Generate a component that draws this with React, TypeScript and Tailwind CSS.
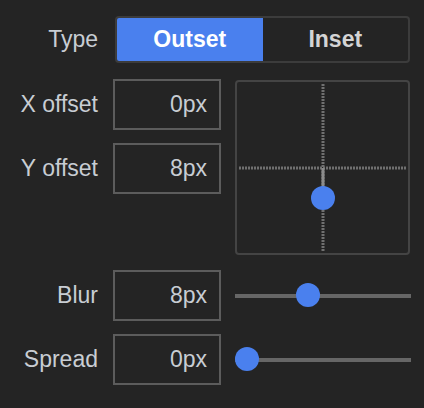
import { useState } from 'react';

const MAX = 20;

const Field = ({ label, value }: { label: string; value: number }) => (
  <div className="flex items-center h-[51px]">
    <span className="w-[98px] text-right text-[#c8cdd3] whitespace-nowrap">{label}</span>
    <div className="ml-[15px] w-[108px] h-[51px] border-2 border-[#5c5c5c] flex items-center justify-end pr-[12px] text-[#c8cdd3]">
      {value}px
    </div>
  </div>
);

const Slider = ({ value }: { value: number }) => (
  <div className="relative ml-[14px] w-[176px] h-[51px] flex items-center">
    <div className="w-full h-[4px] bg-[#666666]" />
    <div
      className="absolute top-[13px] w-[24px] h-[24px] rounded-full bg-[#4a80ee]"
      style={{ left: (value / MAX) * 152 }}
    />
  </div>
);

const OffsetPad = ({ x, y }: { x: number; y: number }) => {
  const c = 86;
  const hx = c + x * 3.75;
  const hy = c + y * 3.75;
  return (
    <div className="ml-[14px] mt-[1px] w-[175px] h-[175px] border-2 border-[#444444] rounded-[4px]">
      <svg width="171" height="171" viewBox="0 0 171 171">
        <line x1={c} y1="2" x2={c} y2="169" stroke="#707070" strokeWidth="3" strokeDasharray="2 1" />
        <line x1="2" y1={c} x2="169" y2={c} stroke="#707070" strokeWidth="3" strokeDasharray="2 1" />
        <line x1={c} y1={c} x2={hx} y2={hy} stroke="#8c8c8c" strokeWidth="3" />
        <circle cx={hx} cy={hy} r="12" fill="#4a80ee" />
      </svg>
    </div>
  );
};

export default function App() {
  const [type, setType] = useState<'outset' | 'inset'>('outset');
  const shadow = { x: 0, y: 8, blur: 8, spread: 0 };

  return (
    <div className="w-[424px] h-[408px] bg-[#242424] pt-[16px] text-[23px] font-['Liberation_Sans',Arial,sans-serif]">
      <div className="flex items-center h-[47px]">
        <span className="w-[98px] text-right text-[#c8cdd3]">Type</span>
        <div className="ml-[17px] w-[295px] h-[47px] flex border-2 border-[#3c3c3c] rounded-[4px] overflow-hidden">
          <button
            onClick={() => setType('outset')}
            className={`flex-1 font-bold ${type === 'outset' ? 'bg-[#4a80ee] text-white' : 'text-[#d4d4d4]'}`}
          >
            Outset
          </button>
          <button
            onClick={() => setType('inset')}
            className={`flex-1 font-bold ${type === 'inset' ? 'bg-[#4a80ee] text-white' : 'text-[#d4d4d4]'}`}
          >
            Inset
          </button>
        </div>
      </div>

      <div className="flex mt-[16px]">
        <div className="flex flex-col gap-[13px]">
          <Field label="X offset" value={shadow.x} />
          <Field label="Y offset" value={shadow.y} />
        </div>
        <OffsetPad x={shadow.x} y={shadow.y} />
      </div>

      <div className="flex items-center mt-[15px]">
        <Field label="Blur" value={shadow.blur} />
        <Slider value={shadow.blur} />
      </div>
      <div className="flex items-center mt-[13px]">
        <Field label="Spread" value={shadow.spread} />
        <Slider value={shadow.spread} />
      </div>
    </div>
  );
}
